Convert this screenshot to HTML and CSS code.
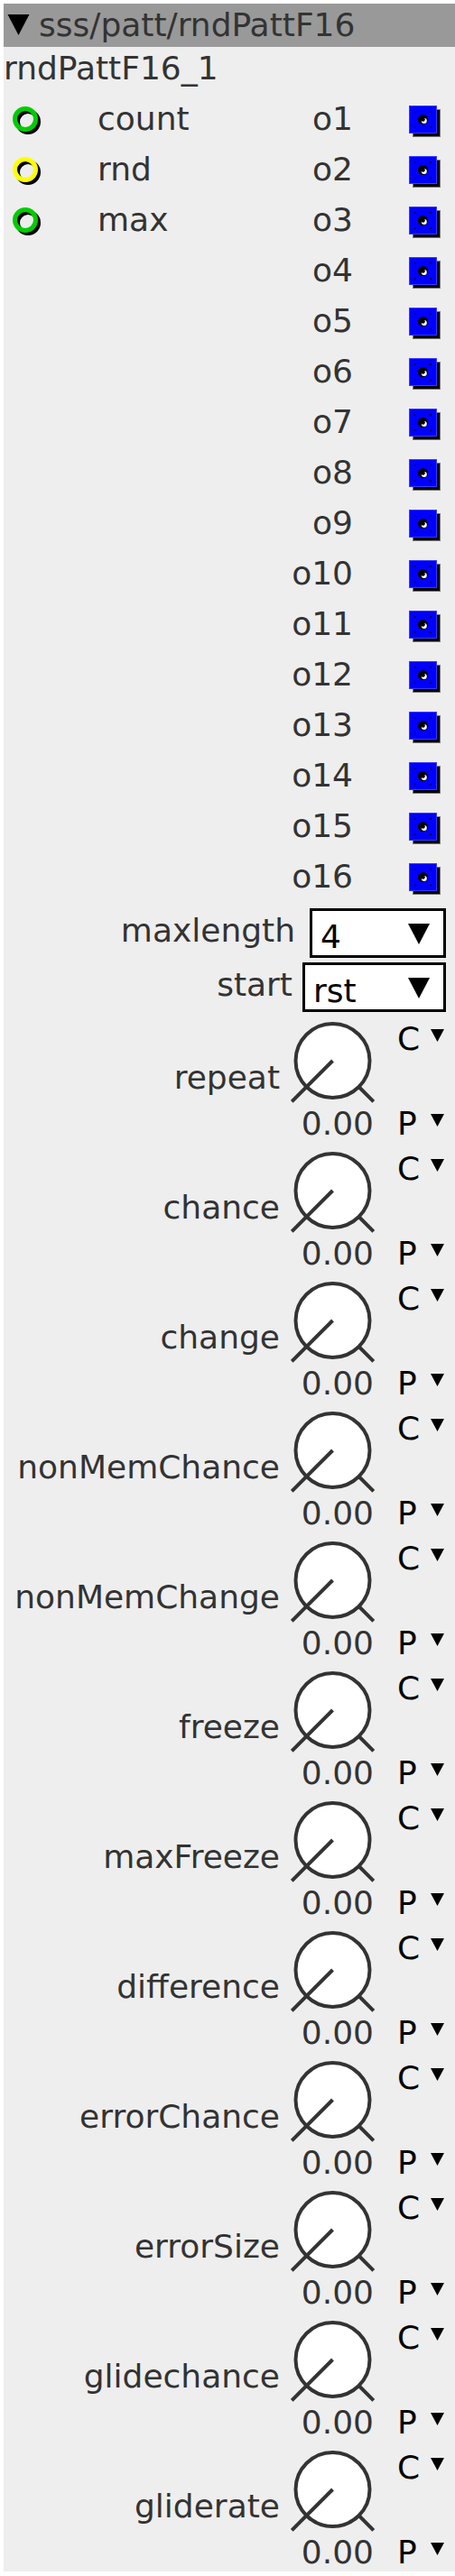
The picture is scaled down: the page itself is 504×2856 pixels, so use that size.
FILE: index.html
```html
<!DOCTYPE html>
<html>
<head>
<meta charset="utf-8">
<title>rndPattF16</title>
<link rel="stylesheet" href="styles.css">
</head>
<body>
<svg class="defs" width="0" height="0" aria-hidden="true">
  <symbol id="ring-green" viewBox="0 0 34 34">
    <circle cx="18" cy="18" r="11.5" fill="none" stroke="#000" stroke-width="5"/>
    <circle cx="15" cy="15" r="11.5" fill="none" stroke="#00cc00" stroke-width="5"/>
  </symbol>
  <symbol id="ring-yellow" viewBox="0 0 34 34">
    <circle cx="18" cy="18" r="11.5" fill="none" stroke="#000" stroke-width="5"/>
    <circle cx="15" cy="15" r="11.5" fill="none" stroke="#ffff00" stroke-width="5"/>
  </symbol>
  <symbol id="outsq" viewBox="0 0 36 36">
    <rect x="4.5" y="4.5" width="30" height="30" fill="#000" stroke="#777" stroke-width="1"/>
    <rect x="0.5" y="0.5" width="30" height="30" fill="#0000ff" stroke="#3a3aff" stroke-width="1"/>
    <rect x="6" y="6" width="1.6" height="1.6" fill="#000"/>
    <rect x="23.4" y="6" width="1.6" height="1.6" fill="#000"/>
    <rect x="6" y="23.4" width="1.6" height="1.6" fill="#000"/>
    <rect x="23.4" y="23.4" width="1.6" height="1.6" fill="#000"/>
    <circle cx="15.5" cy="15.5" r="5.5" fill="#000"/>
    <circle cx="16.8" cy="17" r="3" fill="#fff"/>
    <circle cx="15.6" cy="15.6" r="2.2" fill="#000"/>
  </symbol>
  <symbol id="knob" viewBox="0 0 96 94">
    <circle cx="46.5" cy="45" r="41" fill="#fff" stroke="#333" stroke-width="4"/>
    <line x1="46.5" y1="45" x2="1.2" y2="90.3" stroke="#333" stroke-width="4"/>
    <line x1="75.5" y1="74" x2="91.8" y2="90.3" stroke="#333" stroke-width="4"/>
  </symbol>
  <symbol id="tri" viewBox="0 0 24 23">
    <polygon points="0,0 24,0 12,23" fill="#000"/>
  </symbol>
  <symbol id="mini" viewBox="0 0 15 14">
    <polygon points="0,0 15,0 7.5,14" fill="#000"/>
  </symbol>
</svg>

<div class="panel">
  <div class="hdr">
    <svg class="hdr-tri"><use href="#tri"/></svg>
    <span class="hdr-text">sss/patt/rndPattF16</span>
  </div>
  <div class="title">rndPattF16_1</div>

  <div class="ports">
    <div class="inlets">
      <div class="inlet"><svg class="ring"><use href="#ring-green"/></svg><span class="in-label">count</span></div>
      <div class="inlet"><svg class="ring"><use href="#ring-yellow"/></svg><span class="in-label">rnd</span></div>
      <div class="inlet"><svg class="ring"><use href="#ring-green"/></svg><span class="in-label">max</span></div>
    </div>
    <div class="outlets">
      <div class="outlet"><span class="out-label">o1</span><svg class="sq"><use href="#outsq"/></svg></div>
      <div class="outlet"><span class="out-label">o2</span><svg class="sq"><use href="#outsq"/></svg></div>
      <div class="outlet"><span class="out-label">o3</span><svg class="sq"><use href="#outsq"/></svg></div>
      <div class="outlet"><span class="out-label">o4</span><svg class="sq"><use href="#outsq"/></svg></div>
      <div class="outlet"><span class="out-label">o5</span><svg class="sq"><use href="#outsq"/></svg></div>
      <div class="outlet"><span class="out-label">o6</span><svg class="sq"><use href="#outsq"/></svg></div>
      <div class="outlet"><span class="out-label">o7</span><svg class="sq"><use href="#outsq"/></svg></div>
      <div class="outlet"><span class="out-label">o8</span><svg class="sq"><use href="#outsq"/></svg></div>
      <div class="outlet"><span class="out-label">o9</span><svg class="sq"><use href="#outsq"/></svg></div>
      <div class="outlet"><span class="out-label">o10</span><svg class="sq"><use href="#outsq"/></svg></div>
      <div class="outlet"><span class="out-label">o11</span><svg class="sq"><use href="#outsq"/></svg></div>
      <div class="outlet"><span class="out-label">o12</span><svg class="sq"><use href="#outsq"/></svg></div>
      <div class="outlet"><span class="out-label">o13</span><svg class="sq"><use href="#outsq"/></svg></div>
      <div class="outlet"><span class="out-label">o14</span><svg class="sq"><use href="#outsq"/></svg></div>
      <div class="outlet"><span class="out-label">o15</span><svg class="sq"><use href="#outsq"/></svg></div>
      <div class="outlet"><span class="out-label">o16</span><svg class="sq"><use href="#outsq"/></svg></div>
    </div>
  </div>

  <div class="selects">
    <div class="sel-row">
      <span class="sel-label sel-label-len">maxlength</span>
      <div class="sel sel-len"><span class="sel-val">4</span><svg class="sel-arrow"><use href="#tri"/></svg></div>
    </div>
    <div class="sel-row">
      <span class="sel-label sel-label-start">start</span>
      <div class="sel sel-start"><span class="sel-val">rst</span><svg class="sel-arrow"><use href="#tri"/></svg></div>
    </div>
  </div>

  <div class="knobs">
    <div class="knob-row">
      <span class="k-label">repeat</span>
      <svg class="knob"><use href="#knob"/></svg>
      <div class="k-mode k-c"><span>C</span><svg class="mini"><use href="#mini"/></svg></div>
      <span class="k-val">0.00</span>
      <div class="k-mode k-p"><span>P</span><svg class="mini"><use href="#mini"/></svg></div>
    </div>
    <div class="knob-row">
      <span class="k-label">chance</span>
      <svg class="knob"><use href="#knob"/></svg>
      <div class="k-mode k-c"><span>C</span><svg class="mini"><use href="#mini"/></svg></div>
      <span class="k-val">0.00</span>
      <div class="k-mode k-p"><span>P</span><svg class="mini"><use href="#mini"/></svg></div>
    </div>
    <div class="knob-row">
      <span class="k-label">change</span>
      <svg class="knob"><use href="#knob"/></svg>
      <div class="k-mode k-c"><span>C</span><svg class="mini"><use href="#mini"/></svg></div>
      <span class="k-val">0.00</span>
      <div class="k-mode k-p"><span>P</span><svg class="mini"><use href="#mini"/></svg></div>
    </div>
    <div class="knob-row">
      <span class="k-label">nonMemChance</span>
      <svg class="knob"><use href="#knob"/></svg>
      <div class="k-mode k-c"><span>C</span><svg class="mini"><use href="#mini"/></svg></div>
      <span class="k-val">0.00</span>
      <div class="k-mode k-p"><span>P</span><svg class="mini"><use href="#mini"/></svg></div>
    </div>
    <div class="knob-row">
      <span class="k-label">nonMemChange</span>
      <svg class="knob"><use href="#knob"/></svg>
      <div class="k-mode k-c"><span>C</span><svg class="mini"><use href="#mini"/></svg></div>
      <span class="k-val">0.00</span>
      <div class="k-mode k-p"><span>P</span><svg class="mini"><use href="#mini"/></svg></div>
    </div>
    <div class="knob-row">
      <span class="k-label">freeze</span>
      <svg class="knob"><use href="#knob"/></svg>
      <div class="k-mode k-c"><span>C</span><svg class="mini"><use href="#mini"/></svg></div>
      <span class="k-val">0.00</span>
      <div class="k-mode k-p"><span>P</span><svg class="mini"><use href="#mini"/></svg></div>
    </div>
    <div class="knob-row">
      <span class="k-label">maxFreeze</span>
      <svg class="knob"><use href="#knob"/></svg>
      <div class="k-mode k-c"><span>C</span><svg class="mini"><use href="#mini"/></svg></div>
      <span class="k-val">0.00</span>
      <div class="k-mode k-p"><span>P</span><svg class="mini"><use href="#mini"/></svg></div>
    </div>
    <div class="knob-row">
      <span class="k-label">difference</span>
      <svg class="knob"><use href="#knob"/></svg>
      <div class="k-mode k-c"><span>C</span><svg class="mini"><use href="#mini"/></svg></div>
      <span class="k-val">0.00</span>
      <div class="k-mode k-p"><span>P</span><svg class="mini"><use href="#mini"/></svg></div>
    </div>
    <div class="knob-row">
      <span class="k-label">errorChance</span>
      <svg class="knob"><use href="#knob"/></svg>
      <div class="k-mode k-c"><span>C</span><svg class="mini"><use href="#mini"/></svg></div>
      <span class="k-val">0.00</span>
      <div class="k-mode k-p"><span>P</span><svg class="mini"><use href="#mini"/></svg></div>
    </div>
    <div class="knob-row">
      <span class="k-label">errorSize</span>
      <svg class="knob"><use href="#knob"/></svg>
      <div class="k-mode k-c"><span>C</span><svg class="mini"><use href="#mini"/></svg></div>
      <span class="k-val">0.00</span>
      <div class="k-mode k-p"><span>P</span><svg class="mini"><use href="#mini"/></svg></div>
    </div>
    <div class="knob-row">
      <span class="k-label">glidechance</span>
      <svg class="knob"><use href="#knob"/></svg>
      <div class="k-mode k-c"><span>C</span><svg class="mini"><use href="#mini"/></svg></div>
      <span class="k-val">0.00</span>
      <div class="k-mode k-p"><span>P</span><svg class="mini"><use href="#mini"/></svg></div>
    </div>
    <div class="knob-row">
      <span class="k-label">gliderate</span>
      <svg class="knob"><use href="#knob"/></svg>
      <div class="k-mode k-c"><span>C</span><svg class="mini"><use href="#mini"/></svg></div>
      <span class="k-val">0.00</span>
      <div class="k-mode k-p"><span>P</span><svg class="mini"><use href="#mini"/></svg></div>
    </div>
  </div>
</div>
</body>
</html>
```
FILE: styles.css
```css
html, body {
  background: #ffffff;
}
body {
  margin: 4px 0 0 4px;
  font-family: "DejaVu Sans", "Liberation Sans", sans-serif;
}
.defs {
  position: absolute;
  width: 0;
  height: 0;
  overflow: hidden;
}
.panel {
  width: 500px;
  background: #eeeeee;
  color: #333333;
  font-size: 36px;
}
.hdr {
  height: 48px;
  background: #999999;
  display: flex;
  align-items: flex-start;
  line-height: 48px;
  white-space: nowrap;
}
.hdr-tri {
  width: 25px;
  height: 23px;
  margin: 12px 0 0 4px;
  flex: none;
}
.hdr-text {
  margin-left: 10px;
}
.title {
  line-height: 48px;
  white-space: nowrap;
}
.ports {
  display: flex;
  justify-content: space-between;
  margin-top: 4px;
}
.inlets,
.outlets {
  display: flex;
  flex-direction: column;
}
.outlets {
  align-items: flex-end;
}
.inlet,
.outlet {
  height: 56px;
  line-height: 56px;
  display: flex;
  align-items: flex-start;
  white-space: nowrap;
}
.ring {
  width: 34px;
  height: 34px;
  margin: 13px 0 0 9px;
  flex: none;
}
.in-label {
  margin-left: 61px;
}
.out-label {
  text-align: right;
}
.sq {
  width: 36px;
  height: 36px;
  margin: 13px 15px 0 62px;
  flex: none;
}
.selects {
  margin-top: 7px;
  display: flex;
  flex-direction: column;
  gap: 5px;
}
.sel-row {
  display: flex;
  justify-content: flex-end;
  align-items: flex-start;
  padding-right: 10px;
}
.sel-label {
  line-height: 42px;
  margin-top: 4px;
}
.sel-label-len {
  margin-right: 16px;
}
.sel-label-start {
  margin-right: 11px;
}
.sel {
  box-sizing: border-box;
  height: 55px;
  border: 3px solid #000000;
  background: #ffffff;
  color: #000000;
  display: flex;
  justify-content: space-between;
  align-items: flex-start;
}
.sel-len {
  width: 151px;
}
.sel-start {
  width: 159px;
}
.sel-val {
  line-height: 42px;
  padding: 8px 0 0 9px;
}
.sel-arrow {
  width: 24px;
  height: 23px;
  margin: 14px 15px 0 0;
  flex: none;
}
.knobs {
  margin-top: 9px;
  display: flex;
  flex-direction: column;
  gap: 8px;
}
.knob-row {
  display: grid;
  grid-template-columns: 1fr 96px 86px;
  grid-template-rows: 94px 42px;
  line-height: 42px;
}
.k-label {
  grid-column: 1;
  grid-row: 1 / 3;
  text-align: right;
  padding: 43px 12px 0 0;
  white-space: nowrap;
}
.knob {
  grid-column: 2;
  grid-row: 1;
  width: 96px;
  height: 94px;
  display: block;
}
.k-val {
  grid-column: 2;
  grid-row: 2;
  text-align: right;
  padding-right: 4px;
}
.k-mode {
  grid-column: 3;
  display: flex;
  justify-content: space-between;
  align-items: flex-start;
  padding: 0 12px 0 22px;
  color: #000000;
}
.k-c {
  grid-row: 1;
}
.k-p {
  grid-row: 2;
}
.mini {
  width: 15px;
  height: 14px;
  margin-top: 10px;
  flex: none;
}
```
